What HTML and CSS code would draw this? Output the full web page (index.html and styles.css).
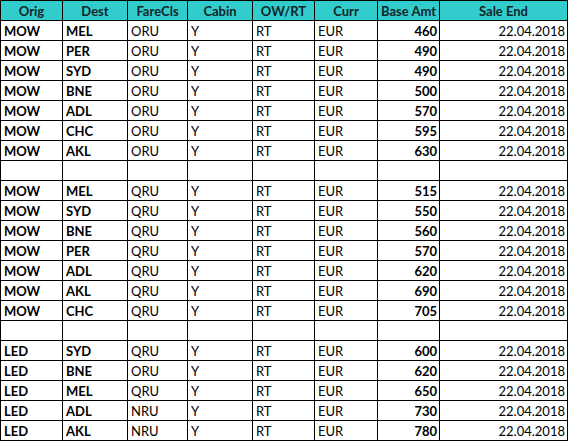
FILE: index.html
```html
<!DOCTYPE html>
<html>
<head>
<meta charset="utf-8">
<link rel="stylesheet" href="styles.css">
</head>
<body>
<table class="fares">
  <colgroup>
    <col class="c-orig"><col class="c-dest"><col class="c-fare"><col class="c-cabin">
    <col class="c-owrt"><col class="c-curr"><col class="c-amt"><col class="c-end">
  </colgroup>
  <thead>
    <tr><th>Orig</th><th>Dest</th><th>FareCls</th><th>Cabin</th><th>OW/RT</th><th>Curr</th><th>Base Amt</th><th>Sale End</th></tr>
  </thead>
  <tbody>
    <tr><td class="b">MOW</td><td class="b">MEL</td><td>ORU</td><td>Y</td><td>RT</td><td>EUR</td><td class="b r">460</td><td class="r">22.04.2018</td></tr>
    <tr><td class="b">MOW</td><td class="b">PER</td><td>ORU</td><td>Y</td><td>RT</td><td>EUR</td><td class="b r">490</td><td class="r">22.04.2018</td></tr>
    <tr><td class="b">MOW</td><td class="b">SYD</td><td>ORU</td><td>Y</td><td>RT</td><td>EUR</td><td class="b r">490</td><td class="r">22.04.2018</td></tr>
    <tr><td class="b">MOW</td><td class="b">BNE</td><td>ORU</td><td>Y</td><td>RT</td><td>EUR</td><td class="b r">500</td><td class="r">22.04.2018</td></tr>
    <tr><td class="b">MOW</td><td class="b">ADL</td><td>ORU</td><td>Y</td><td>RT</td><td>EUR</td><td class="b r">570</td><td class="r">22.04.2018</td></tr>
    <tr><td class="b">MOW</td><td class="b">CHC</td><td>ORU</td><td>Y</td><td>RT</td><td>EUR</td><td class="b r">595</td><td class="r">22.04.2018</td></tr>
    <tr><td class="b">MOW</td><td class="b">AKL</td><td>ORU</td><td>Y</td><td>RT</td><td>EUR</td><td class="b r">630</td><td class="r">22.04.2018</td></tr>
    <tr><td></td><td></td><td></td><td></td><td></td><td></td><td></td><td></td></tr>
    <tr><td class="b">MOW</td><td class="b">MEL</td><td>QRU</td><td>Y</td><td>RT</td><td>EUR</td><td class="b r">515</td><td class="r">22.04.2018</td></tr>
    <tr><td class="b">MOW</td><td class="b">SYD</td><td>QRU</td><td>Y</td><td>RT</td><td>EUR</td><td class="b r">550</td><td class="r">22.04.2018</td></tr>
    <tr><td class="b">MOW</td><td class="b">BNE</td><td>QRU</td><td>Y</td><td>RT</td><td>EUR</td><td class="b r">560</td><td class="r">22.04.2018</td></tr>
    <tr><td class="b">MOW</td><td class="b">PER</td><td>QRU</td><td>Y</td><td>RT</td><td>EUR</td><td class="b r">570</td><td class="r">22.04.2018</td></tr>
    <tr><td class="b">MOW</td><td class="b">ADL</td><td>QRU</td><td>Y</td><td>RT</td><td>EUR</td><td class="b r">620</td><td class="r">22.04.2018</td></tr>
    <tr><td class="b">MOW</td><td class="b">AKL</td><td>QRU</td><td>Y</td><td>RT</td><td>EUR</td><td class="b r">690</td><td class="r">22.04.2018</td></tr>
    <tr><td class="b">MOW</td><td class="b">CHC</td><td>QRU</td><td>Y</td><td>RT</td><td>EUR</td><td class="b r">705</td><td class="r">22.04.2018</td></tr>
    <tr><td></td><td></td><td></td><td></td><td></td><td></td><td></td><td></td></tr>
    <tr><td class="b">LED</td><td class="b">SYD</td><td>QRU</td><td>Y</td><td>RT</td><td>EUR</td><td class="b r">600</td><td class="r">22.04.2018</td></tr>
    <tr><td class="b">LED</td><td class="b">BNE</td><td>ORU</td><td>Y</td><td>RT</td><td>EUR</td><td class="b r">620</td><td class="r">22.04.2018</td></tr>
    <tr><td class="b">LED</td><td class="b">MEL</td><td>QRU</td><td>Y</td><td>RT</td><td>EUR</td><td class="b r">650</td><td class="r">22.04.2018</td></tr>
    <tr><td class="b">LED</td><td class="b">ADL</td><td>NRU</td><td>Y</td><td>RT</td><td>EUR</td><td class="b r">730</td><td class="r">22.04.2018</td></tr>
    <tr><td class="b">LED</td><td class="b">AKL</td><td>NRU</td><td>Y</td><td>RT</td><td>EUR</td><td class="b r">780</td><td class="r">22.04.2018</td></tr>
  </tbody>
</table>
</body>
</html>
```

FILE: styles.css
```css
html, body {
  margin: 0;
  padding: 0;
  background: #ffffff;
}

.fares {
  table-layout: fixed;
  width: 568px;
  border-collapse: separate;
  border-spacing: 1px;
  background: #000000;
  font-family: Lato, "Open Sans", sans-serif;
  font-size: 13px;
  color: #000000;
}

.c-orig { width: 61px; }
.c-dest { width: 64px; }
.c-fare { width: 59px; }
.c-cabin { width: 64px; }
.c-owrt { width: 61px; }
.c-curr { width: 62px; }
.c-amt { width: 61px; }
.c-end { width: 127px; }

.fares th,
.fares td {
  height: 19px;
  box-sizing: border-box;
  padding: 1px 2px 0 3px;
  line-height: 18px;
  white-space: nowrap;
  overflow: hidden;
  vertical-align: top;
  background: #ffffff;
}

.fares th {
  background: #33cccc;
  color: #10262b;
  font-weight: 700;
  text-align: center;
  padding-left: 1px;
  padding-right: 1px;
}

.fares td {
  text-align: left;
  font-weight: 400;
}

.fares td.b {
  font-weight: 700;
}

.fares td.r {
  text-align: right;
}
```
